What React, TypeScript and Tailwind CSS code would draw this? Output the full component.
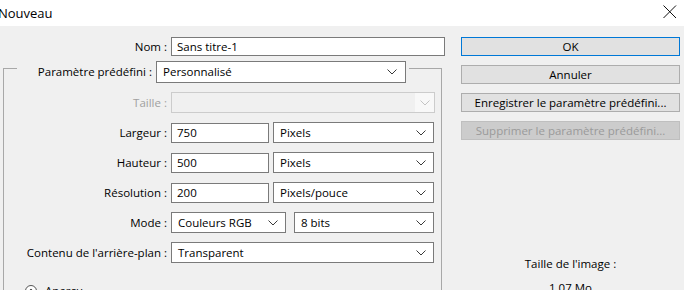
import { ReactNode } from "react";

const font = { fontFamily: '"Segoe UI", "Open Sans", "Liberation Sans", sans-serif' };

const Chevron = ({ disabled }: { disabled?: boolean }) => (
  <svg width="10" height="6" viewBox="0 0 10 6" className="shrink-0">
    <path d="M0.5 0.5 L5 5 L9.5 0.5" fill="none" stroke={disabled ? "#c4c4c4" : "#3a3a3a"} strokeWidth="1" />
  </svg>
);

const Select = ({ value, w, disabled }: { value?: string; w: string; disabled?: boolean }) => (
  <div
    className={`${w} h-[21px] flex items-center justify-between border pl-[6px] ${
      disabled ? "border-[#cccccc] bg-[#f0f0f0]" : "border-[#7a7a7a] bg-white"
    }`}
  >
    <span className="leading-none">{value}</span>
    {disabled ? (
      <div className="w-[19px] h-full flex items-center justify-center bg-[#f8f8f8]">
        <Chevron disabled />
      </div>
    ) : (
      <div className="w-[24px] flex items-center justify-center">
        <Chevron />
      </div>
    )}
  </div>
);

const Input = ({ value, w }: { value: string; w: string }) => (
  <div className={`${w} h-[20px] flex items-center border border-[#7a7a7a] bg-white pl-[5px]`}>
    <span className="leading-none">{value}</span>
  </div>
);

const Row = ({ label, disabled, children }: { label: string; disabled?: boolean; children: ReactNode }) => (
  <div className="h-[21px] flex items-center">
    <div className={`w-[167px] text-right pr-[4px] ${disabled ? "text-[#a0a0a0]" : ""}`}>{label} :</div>
    <div className="flex items-center">{children}</div>
  </div>
);

const Button = ({ label, primary, disabled }: { label: string; primary?: boolean; disabled?: boolean }) => (
  <div
    className={`h-[19px] w-[219px] flex items-center justify-center border leading-none ${
      primary
        ? "border-[#0078d7] bg-[#e1e1e1]"
        : disabled
        ? "border-[#bfbfbf] bg-[#cccccc] text-[#9a9a9a]"
        : "border-[#adadad] bg-[#e1e1e1]"
    }`}
  >
    {label}
  </div>
);

export default function App() {
  return (
    <div className="w-[684px] h-[290px] overflow-hidden bg-[#f0f0f0] text-[11.5px] text-black" style={font}>
      {/* barre de titre */}
      <div className="h-[26px] bg-white flex items-center justify-between">
        <span className="text-[13px] ml-[-2px] leading-none">Nouveau</span>
        <svg width="14" height="14" viewBox="0 0 14 14" className="mr-[7px] mb-[2px]">
          <path d="M0.5 0.5 L13 13 M13 0.5 L0.5 13" stroke="#111" strokeWidth="1" />
        </svg>
      </div>

      <div className="flex">
        {/* colonne gauche */}
        <div className="w-[446px] pt-[11px]">
          <div className="flex items-center h-[19px]">
            <div className="w-[167px] text-right">Nom :</div>
            <div className="ml-[4px] w-[274px] h-[19px] flex items-center border border-[#7a7a7a] bg-white pl-[5px]">
              <span className="leading-none">Sans titre-1</span>
            </div>
          </div>

          <div className="ml-[3px] w-[439px] mt-[5px]">
            <div className="h-[22px] flex">
              <div className="w-[14px] mt-[7px] border-l border-t border-[#a8a8a8]" />
              <div className="w-[135px] h-full flex items-center justify-end">Paramètre prédéfini :</div>
              <div className="ml-[4px]">
                <div className="w-[250px] h-[22px] flex items-center justify-between border border-[#7a7a7a] bg-white pl-[6px]">
                  <span className="leading-none">Personnalisé</span>
                  <div className="w-[26px] flex items-center justify-center">
                    <Chevron />
                  </div>
                </div>
              </div>
              <div className="flex-1 ml-[3px] mt-[7px] border-t border-r border-[#a8a8a8]" />
            </div>

            <div className="border-l border-r border-[#a8a8a8] pt-[9px] pb-[40px] flex flex-col gap-[9px]">
              <Row label="Taille" disabled>
                <Select w="w-[264px]" disabled />
              </Row>
              <Row label="Largeur">
                <Input value="750" w="w-[98px]" />
                <div className="ml-[4px]">
                  <Select value="Pixels" w="w-[161px]" />
                </div>
              </Row>
              <Row label="Hauteur">
                <Input value="500" w="w-[98px]" />
                <div className="ml-[4px]">
                  <Select value="Pixels" w="w-[161px]" />
                </div>
              </Row>
              <Row label="Résolution">
                <Input value="200" w="w-[98px]" />
                <div className="ml-[4px]">
                  <Select value="Pixels/pouce" w="w-[161px]" />
                </div>
              </Row>
              <Row label="Mode">
                <Select value="Couleurs RGB" w="w-[115px]" />
                <div className="ml-[8px]">
                  <Select value="8 bits" w="w-[140px]" />
                </div>
              </Row>
              <Row label="Contenu de l'arrière-plan">
                <Select value="Transparent" w="w-[263px]" />
              </Row>
              <div className="flex items-center gap-[8px] ml-[21px] mt-[10px]">
                <svg width="12" height="12" viewBox="0 0 12 12">
                  <circle cx="6" cy="6" r="5.5" fill="#fff" stroke="#555" />
                  <path d="M3.5 7 L6 4.5 L8.5 7" fill="none" stroke="#222" strokeWidth="1.2" />
                </svg>
                <span>Aperçu</span>
              </div>
            </div>
          </div>
        </div>

        {/* colonne droite */}
        <div className="ml-[15px] w-[219px] pt-[11px] flex flex-col">
          <div className="flex flex-col gap-[9px]">
            <Button label="OK" primary />
            <Button label="Annuler" />
            <Button label="Enregistrer le paramètre prédéfini..." />
            <Button label="Supprimer le paramètre prédéfini..." disabled />
          </div>
          <div className="mt-[115px] flex flex-col items-center gap-[7px]">
            <span>Taille de l'image :</span>
            <span>1,07 Mo</span>
          </div>
        </div>
      </div>
    </div>
  );
}
